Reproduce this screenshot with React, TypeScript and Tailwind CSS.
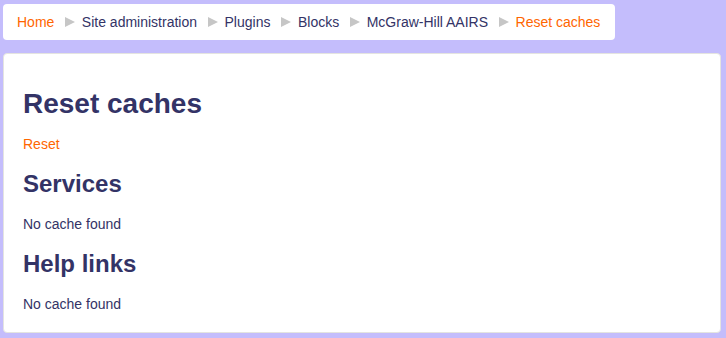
import React from 'react';

const crumbs = ['Home', 'Site administration', 'Plugins', 'Blocks', 'McGraw-Hill AAIRS', 'Reset caches'];

const Sep = () => (
  <svg className="ml-[10.5px] mr-[7px] shrink-0" width="10" height="10" viewBox="0 0 10 10">
    <path d="M0 0 L10 5 L0 10 Z" fill="#c6c6c6" />
  </svg>
);

export default function App() {
  return (
    <div
      className="h-[338px] w-[726px] overflow-hidden bg-[#c4bdfc] pt-[4px] pl-[3px] pr-[5px] pb-[5px] text-[#333366]"
      style={{ fontFamily: '"Liberation Sans", Arial, sans-serif' }}
    >
      {/* Breadcrumb */}
      <nav className="inline-flex items-center rounded-[4px] bg-white pl-[14px] pr-[15px] py-[8px] text-[14px] leading-[20px]">
        {crumbs.map((c, i) => (
          <React.Fragment key={c}>
            {i > 0 && <Sep />}
            <span className={i === 0 || i === crumbs.length - 1 ? 'text-[#ff6600]' : 'text-[#333366]'}>{c}</span>
          </React.Fragment>
        ))}
      </nav>

      {/* Main content */}
      <div className="mt-[13px] h-[280px] rounded-[4px] border border-[#e4e4e0] bg-white pl-[19px] pt-[34px]">
        <h2 className="text-[28px] font-bold leading-[32px]">Reset caches</h2>
        <a className="mt-[14px] block text-[14px] leading-[20px] text-[#ff6600]">Reset</a>
        <h3 className="mt-[16px] text-[24px] font-bold leading-[28px]">Services</h3>
        <p className="mt-[16px] text-[14px] leading-[20px]">No cache found</p>
        <h3 className="mt-[16px] text-[24px] font-bold leading-[28px]">Help links</h3>
        <p className="mt-[16px] text-[14px] leading-[20px]">No cache found</p>
      </div>
    </div>
  );
}
